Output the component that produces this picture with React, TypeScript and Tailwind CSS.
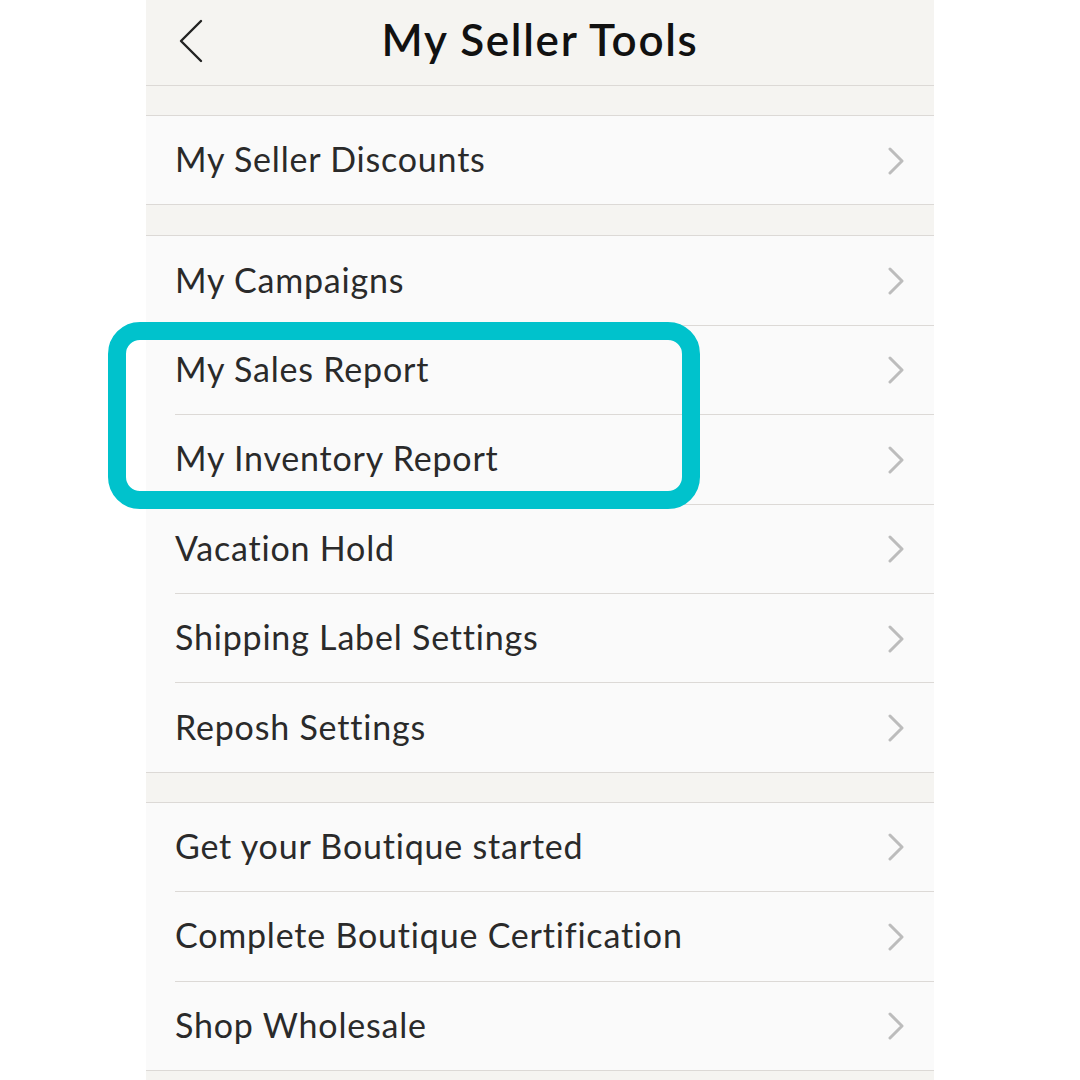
import React from "react";

const Chevron = () => (
  <svg width="18" height="28" viewBox="0 0 18 28" className="shrink-0">
    <path d="M3 2 L15 14 L3 26" fill="none" stroke="#bcbcbc" strokeWidth="3" strokeLinecap="round" strokeLinejoin="round" />
  </svg>
);

type RowProps = { label: string; last?: boolean };

const Row = ({ label, last }: RowProps) => (
  <div className="relative h-[89.4px] flex items-center pl-[29px] pr-[29px] bg-[#fafafa]">
    <span className="flex-1 text-[34px] text-[#2a2a2a] tracking-[0.8px] pb-[4px]">{label}</span>
    <Chevron />
    <div className={`absolute bottom-0 right-0 h-px bg-[#dcd9d6] ${last ? "left-0" : "left-[29px]"}`} />
  </div>
);

const Group = ({ items }: { items: string[] }) => (
  <div className="border-t border-[#dcd9d6]">
    {items.map((l, i) => (
      <Row key={l} label={l} last={i === items.length - 1} />
    ))}
  </div>
);

export default function App() {
  return (
    <div className="w-[1080px] h-[1080px] bg-white flex justify-center overflow-hidden" style={{ fontFamily: "Lato, 'Open Sans', sans-serif" }}>
      <div className="relative w-[788px] bg-[#f5f4f1] flex flex-col">
        <div className="h-[86px] border-b border-[#dcd9d6] flex items-center relative">
          <svg width="26" height="44" viewBox="0 0 26 44" className="absolute left-[33px] top-[19px]">
            <path d="M22 2 L2 22 L22 42" fill="none" stroke="#222" strokeWidth="2.4" strokeLinecap="round" strokeLinejoin="round" />
          </svg>
          <div className="w-full text-center text-[44px] font-semibold text-[#111] tracking-[1.7px] leading-none pb-[8px]">My Seller Tools</div>
        </div>
        <div className="h-[29px]" />
        <Group items={["My Seller Discounts"]} />
        <div className="h-[30px]" />
        <Group
          items={[
            "My Campaigns",
            "My Sales Report",
            "My Inventory Report",
            "Vacation Hold",
            "Shipping Label Settings",
            "Reposh Settings",
          ]}
        />
        <div className="h-[29px]" />
        <Group items={["Get your Boutique started", "Complete Boutique Certification", "Shop Wholesale"]} />
        <div className="absolute left-[-38px] top-[322px] w-[592px] h-[187px] border-[18px] border-[#00c2cc] rounded-[32px]" />
      </div>
    </div>
  );
}
